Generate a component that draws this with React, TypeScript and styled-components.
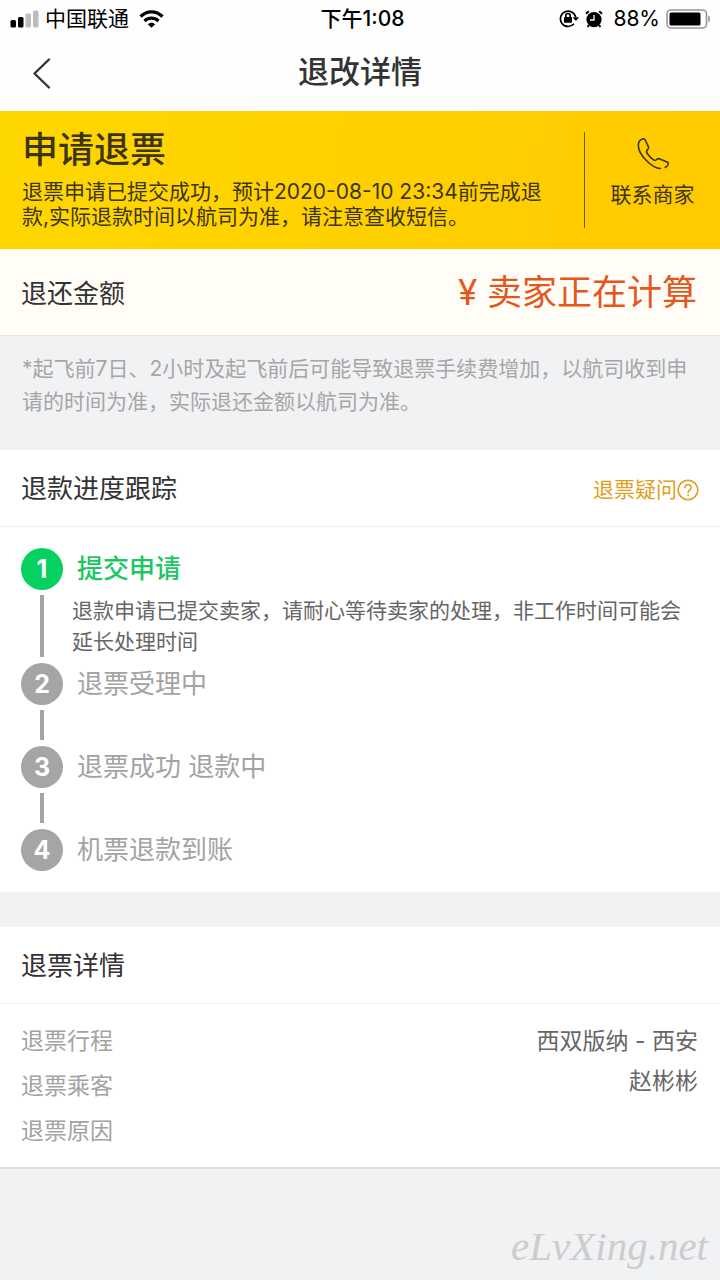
import React from "react";
import styled, { createGlobalStyle, css } from "styled-components";

const GlobalStyle = createGlobalStyle`
  * { box-sizing: border-box; }
  body {
    margin: 0;
    background: #f1f2f4;
    color: #333;
    font-family: Inter, "Noto Sans CJK SC", sans-serif;
  }
  h1, h2, p, ol, ul { margin: 0; padding: 0; }
  ol, ul { list-style: none; }
  button {
    border: 0;
    padding: 0;
    background: none;
    color: inherit;
    font: inherit;
    cursor: pointer;
  }
`;

const Page = styled.div`
  position: relative;
  min-height: 100vh;
  background: #f1f2f4;
`;

const StatusBar = styled.div`
  display: grid;
  grid-template-columns: 1fr auto 1fr;
  align-items: center;
  height: 36px;
  padding: 0 9px 0 10px;
  background: #fefefe;
  color: #000;
  font-size: 21px;
  line-height: 36px;
`;

const StatusGroup = styled.div<{ $end?: boolean }>`
  display: flex;
  align-items: center;
  gap: 6px;
  justify-content: ${(p) => (p.$end ? "flex-end" : "flex-start")};
`;

const Carrier = styled.span`
  margin-right: 4px;
`;

const BatteryLevel = styled.span`
  margin-left: 4px;
`;

const Clock = styled.time`
  padding: 1px 0 0 4px;
  font-weight: 500;
`;

const NavBar = styled.header`
  display: grid;
  grid-template-columns: 84px 1fr 84px;
  align-items: center;
  height: 75px;
  background: #fefefe;
`;

const BackButton = styled.button`
  display: flex;
  justify-content: center;
`;

const NavTitle = styled.h1`
  padding-bottom: 3px;
  font-size: 31px;
  font-weight: 500;
  line-height: 68px;
  text-align: center;
`;

const Banner = styled.section`
  display: flex;
  align-items: center;
  height: 138px;
  background: linear-gradient(100deg, #ffd700, #ffca00);
  color: #3d3510;
`;

const BannerBody = styled.div`
  flex: 1;
  padding: 0 36px 8px 22px;
`;

const BannerTitle = styled.h2`
  font-size: 36px;
  font-weight: 500;
  line-height: 52px;
  margin-bottom: 3px;
`;

const BannerText = styled.p`
  font-size: 21px;
  line-height: 25px;
`;

const ContactButton = styled.button`
  display: flex;
  flex-direction: column;
  align-items: center;
  gap: 8px;
  width: 136px;
  height: 96px;
  padding-top: 5px;
  border-left: 1px solid #6b5a10;
  font-size: 21px;
  line-height: 32px;
`;

const AmountRow = styled.section`
  display: flex;
  align-items: center;
  justify-content: space-between;
  height: 87px;
  padding: 0 23px 2px 21px;
  border-bottom: 1px solid #e2e3e4;
  background: #fffdf6;
  font-size: 26px;
`;

const Amount = styled.strong`
  padding-top: 2px;
  color: #e4571b;
  font-size: 35px;
  font-weight: 400;
  line-height: 48px;
`;

const Note = styled.p`
  padding: 16px 22px 32px;
  color: #a6a6a7;
  font-size: 21px;
  line-height: 33px;
`;

const Card = styled.section<{ $last?: boolean }>`
  background: #fff;
  ${(p) =>
    p.$last
      ? css`
          border-bottom: 2px solid #dfe0e1;
        `
      : css`
          margin-bottom: 35px;
        `}
`;

const CardHeader = styled.div`
  display: flex;
  align-items: center;
  justify-content: space-between;
  height: 77px;
  padding: 2px 21px 0;
  border-bottom: 1px solid #efefef;
`;

const CardTitle = styled.h2`
  font-size: 26px;
  font-weight: 400;
  line-height: 40px;
`;

const HelpLink = styled.a`
  display: flex;
  align-items: center;
  padding-top: 2px;
  color: #e0a01c;
  font-size: 21px;
  line-height: 32px;
  text-decoration: none;
`;

const Steps = styled.ol`
  padding: 21px 22px 21px 21px;
`;

const Step = styled.li`
  display: flex;
  gap: 9px;

  &:not(:last-child) {
    min-height: 83px;
  }
`;

const Marker = styled.div`
  display: flex;
  flex-direction: column;
  align-items: center;
`;

const StepNumber = styled.span<{ $active?: boolean }>`
  width: 42px;
  height: 42px;
  border-radius: 50%;
  background: ${(p) => (p.$active ? "#06d160" : "#a5a5a5")};
  color: #fff;
  font-size: 25px;
  font-weight: 700;
  line-height: 42px;
  text-align: center;
`;

const Connector = styled.span`
  flex: 1;
  width: 4px;
  margin: 5px 0 6px;
  background: #a5a5a5;
`;

const StepTitle = styled.h3<{ $active?: boolean }>`
  margin: 0;
  padding-left: 5px;
  color: ${(p) => (p.$active ? "#1dc763" : "#a3a3a3")};
  font-size: 26px;
  font-weight: ${(p) => (p.$active ? 500 : 400)};
  line-height: 42px;
`;

const StepText = styled.p`
  padding: 5px 0 6px;
  color: #666;
  font-size: 21px;
  line-height: 31px;
`;

const Details = styled.div`
  display: flex;
  justify-content: space-between;
  padding: 15px 22px 13px 21px;
  font-size: 23px;
`;

const DetailLabels = styled.ul`
  color: #a3a3a3;
  line-height: 45px;
`;

const DetailValues = styled.ul`
  color: #666;
  line-height: 40px;
  padding-top: 2px;
  text-align: right;
`;

const Watermark = styled.span`
  position: absolute;
  right: 12px;
  bottom: 12px;
  color: #cbcccd;
  font-family: "Liberation Serif", serif;
  font-size: 41px;
  font-style: italic;
  line-height: 44px;
`;

const SignalIcon = () => (
  <svg width="29" height="18" viewBox="0 0 29 18" aria-hidden="true">
    <rect x="0.5" y="10" width="5.5" height="7.5" rx="1.5" />
    <rect x="8" y="7" width="5.5" height="10.5" rx="1.5" />
    <rect x="15.5" y="3.5" width="5.5" height="14" rx="1.5" fill="#bdbdbd" />
    <rect x="23" y="0.5" width="5.5" height="17" rx="1.5" fill="#bdbdbd" />
  </svg>
);

const WifiIcon = () => (
  <svg width="25" height="18" viewBox="0 0 25 18" fill="none" stroke="#000" strokeWidth="3.2" aria-hidden="true">
    <path d="M1.500 6.500C8 .2 17 .2 23.500 6.500" />
    <path d="M5.500 11C9.500 7.200 15.500 7.200 19.500 11" />
    <path d="M8.800 14.300C11 12.200 14 12.200 16.200 14.300L12.500 17.800Z" fill="#000" stroke="none" />
  </svg>
);

const LockIcon = () => (
  <svg width="20" height="19" viewBox="0 0 20 19" fill="none" stroke="#000" strokeWidth="1.700" aria-hidden="true">
    <path d="M15 14.800A7.700 7.700 0 1 1 16.700 8.200" />
    <path d="M13.700 8.200H20L16.900 12Z" fill="#000" stroke="none" />
    <rect x="5" y="8" width="8" height="5.800" rx="0.800" fill="#000" stroke="none" />
    <path d="M6.800 8.500V6.700a2.200 2.200 0 0 1 4.400 0V8.500" />
  </svg>
);

const AlarmIcon = () => (
  <svg width="18" height="18" viewBox="0 0 18 18" fill="none" aria-hidden="true">
    <circle cx="9" cy="9.600" r="7.600" fill="#000" />
    <path d="M1 3.700L3.800 1.200M17 3.700L14.200 1.200" stroke="#000" strokeWidth="2" />
    <path d="M4 15L2.600 17M14 15L15.400 17" stroke="#000" strokeWidth="2" />
    <path d="M9 5V10H5" stroke="#fff" strokeWidth="1.300" />
  </svg>
);

const BatteryIcon = () => (
  <svg width="45" height="20" viewBox="0 0 45 20" aria-hidden="true">
    <rect x="1" y="1" width="39.500" height="18" rx="4" fill="none" stroke="#999" strokeWidth="1.600" />
    <rect x="3.500" y="3.500" width="31" height="13" rx="1.500" />
    <path d="M42.200 6.500c2.600 1.200 2.600 5.800 0 7z" fill="#999" />
  </svg>
);

const BackIcon = () => (
  <svg width="18" height="32" viewBox="0 0 18 32" fill="none" stroke="#333" strokeWidth="2.400" aria-hidden="true">
    <path d="M16 1.500L1.500 15.500L16 29.500" strokeLinecap="round" strokeLinejoin="round" />
  </svg>
);

const PhoneIcon = () => (
  <svg
    width="34"
    height="34"
    viewBox="0 0 34 34"
    fill="none"
    stroke="#3d3510"
    strokeWidth="1.600"
    strokeLinecap="round"
    strokeLinejoin="round"
    aria-hidden="true"
  >
    <path d="M24.500 31.500C16 31.500 2 17.500 2.300 8C2.400 5 4.500 2.500 7 1.800C8 1.500 8.700 2 9.100 2.800L12.400 9.700C12.900 10.900 12.500 11.700 11.700 12.400C10.300 13.500 10.200 14.800 11.100 16.200C12.800 18.900 15.300 21.500 18 23.100C18.900 23.700 19.700 23.400 20.400 22.700C21.400 21.700 22.500 21.400 23.900 21.900L31 25C32.300 25.600 32.600 26.500 31.900 27.800C31.200 29 30.300 29.900 29.200 30.500" />
  </svg>
);

const HelpIcon = () => (
  <svg width="22" height="22" viewBox="0 0 22 22" fill="none" stroke="#e0a01c" strokeWidth="1.600" aria-hidden="true">
    <circle cx="11" cy="11" r="9.800" />
    <path d="M7.900 8.800C7.900 4.700 14.200 4.700 14.200 8.600C14.200 10.800 11.100 10.900 11.100 13.400" strokeLinecap="round" />
    <circle cx="11.100" cy="16.200" r="1" fill="#e0a01c" stroke="none" />
  </svg>
);

const steps = [
  {
    title: "提交申请",
    text: "退款申请已提交卖家，请耐心等待卖家的处理，非工作时间可能会延长处理时间",
    active: true,
  },
  { title: "退票受理中" },
  { title: "退票成功 退款中" },
  { title: "机票退款到账" },
];

export default function App() {
  return (
    <Page>
      <GlobalStyle />
      <StatusBar>
        <StatusGroup>
          <SignalIcon />
          <Carrier>中国联通</Carrier>
          <WifiIcon />
        </StatusGroup>
        <Clock>下午1:08</Clock>
        <StatusGroup $end>
          <LockIcon />
          <AlarmIcon />
          <BatteryLevel>88%</BatteryLevel>
          <BatteryIcon />
        </StatusGroup>
      </StatusBar>
      <NavBar>
        <BackButton aria-label="返回">
          <BackIcon />
        </BackButton>
        <NavTitle>退改详情</NavTitle>
      </NavBar>
      <main>
        <Banner>
          <BannerBody>
            <BannerTitle>申请退票</BannerTitle>
            <BannerText>
              退票申请已提交成功，预计2020-08-10 23:34前完成退款,实际退款时间以航司为准，请注意查收短信。
            </BannerText>
          </BannerBody>
          <ContactButton>
            <PhoneIcon />
            联系商家
          </ContactButton>
        </Banner>
        <AmountRow>
          <span>退还金额</span>
          <Amount>¥ 卖家正在计算</Amount>
        </AmountRow>
        <Note>
          *起飞前7日、2小时及起飞前后可能导致退票手续费增加，以航司收到申请的时间为准，实际退还金额以航司为准。
        </Note>
        <Card>
          <CardHeader>
            <CardTitle>退款进度跟踪</CardTitle>
            <HelpLink href="#help">
              退票疑问
              <HelpIcon />
            </HelpLink>
          </CardHeader>
          <Steps>
            {steps.map((step, i) => (
              <Step key={step.title}>
                <Marker>
                  <StepNumber $active={step.active}>{i + 1}</StepNumber>
                  {i < steps.length - 1 && <Connector />}
                </Marker>
                <div>
                  <StepTitle $active={step.active}>{step.title}</StepTitle>
                  {step.text && <StepText>{step.text}</StepText>}
                </div>
              </Step>
            ))}
          </Steps>
        </Card>
        <Card $last>
          <CardHeader>
            <CardTitle>退票详情</CardTitle>
          </CardHeader>
          <Details>
            <DetailLabels>
              <li>退票行程</li>
              <li>退票乘客</li>
              <li>退票原因</li>
            </DetailLabels>
            <DetailValues>
              <li>西双版纳 - 西安</li>
              <li>赵彬彬</li>
            </DetailValues>
          </Details>
        </Card>
      </main>
      <Watermark>eLvXing.net</Watermark>
    </Page>
  );
}
